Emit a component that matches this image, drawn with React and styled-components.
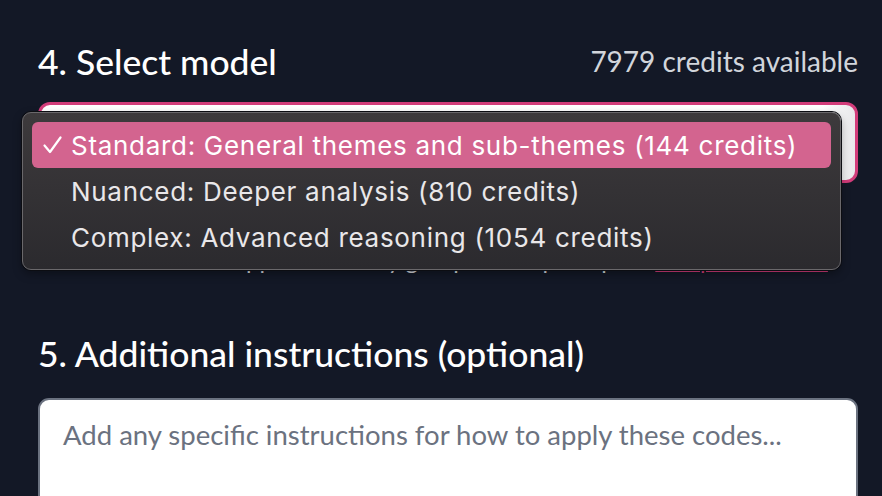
import React from "react";
import styled, { createGlobalStyle } from "styled-components";

const GlobalStyle = createGlobalStyle`
  html, body {
    margin: 0;
    padding: 0;
    background: #131826;
  }
  body {
    font-family: Lato, "Noto Sans", sans-serif;
    overflow: hidden;
  }
`;

const Page = styled.div`
  width: 882px;
  height: 496px;
  box-sizing: border-box;
  padding: 38px 24px 0 38px;
  background: #131826;
  overflow: hidden;
`;

const Section = styled.section`
  display: flex;
  flex-direction: column;
  margin-bottom: ${(p) => p.$gap || 0}px;
`;

const HeaderRow = styled.div`
  display: flex;
  justify-content: space-between;
  align-items: center;
`;

const Heading = styled.h2`
  margin: 0;
  font-family: Lato, sans-serif;
  font-weight: 500;
  font-size: 35.5px;
  line-height: 48px;
  color: #ffffff;
`;

const Credits = styled.span`
  font-family: Lato, sans-serif;
  font-size: 28px;
  color: #d1d5db;
  padding-bottom: 2px;
`;

const SelectArea = styled.div`
  position: relative;
  margin-top: 16px;
`;

const SelectBox = styled.div`
  height: 81px;
  box-sizing: border-box;
  border: 3px solid #d23c7a;
  border-radius: 12px;
  background: linear-gradient(90deg, #ffffff 96%, #e8e8ea 100%);
`;

const Menu = styled.ul`
  position: absolute;
  left: -16px;
  top: 10px;
  width: 819px;
  margin: 0;
  padding: 9px 9px;
  box-sizing: border-box;
  list-style: none;
  border-radius: 9px;
  border: 1px solid #6a686b;
  background: linear-gradient(180deg, #3d3a3c 0%, #2b2a2e 100%);
  box-shadow: 0 0 0 1px #0c0d12, 0 4px 10px rgba(0, 0, 0, 0.35);
`;

const Option = styled.li`
  display: flex;
  align-items: center;
  height: 46px;
  padding: 0 0 0 11px;
  border-radius: 6px;
  font-family: Inter, "Liberation Sans", sans-serif;
  font-size: 26px;
  letter-spacing: 0.7px;
  color: #e9e7e9;
  background: ${(p) => (p.$active ? "#d3648f" : "transparent")};
  ${(p) => p.$active && "color: #ffffff;"}
`;

const Check = styled.span`
  width: 28px;
  display: inline-flex;
  align-items: center;
`;

const Hint = styled.p`
  margin: 62px 0 0;
  font-family: Lato, sans-serif;
  font-size: 24px;
  line-height: 30px;
  color: #d1d5db;
  padding-left: 196px;

  a {
    color: #d23c7a;
    text-decoration: underline;
    text-decoration-thickness: 2px;
  }
`;

const TextArea = styled.div`
  margin-top: 20px;
  height: 140px;
  box-sizing: border-box;
  border: 2px solid #6b7280;
  border-radius: 11px;
  background: #ffffff;
  padding: 18px 23px;
  font-family: Lato, sans-serif;
  font-size: 27.5px;
  color: #6b7280;
`;

const options = [
  { label: "Standard: General themes and sub-themes (144 credits)", active: true },
  { label: "Nuanced: Deeper analysis (810 credits)" },
  { label: "Complex: Advanced reasoning (1054 credits)" },
];

export default function App() {
  return (
    <Page>
      <GlobalStyle />
      <Section $gap={55}>
        <HeaderRow>
          <Heading>4. Select model</Heading>
          <Credits>7979 credits available</Credits>
        </HeaderRow>
        <SelectArea>
          <SelectBox />
          <Hint>
            applies to every group of sample replies <a href="#">compare models</a>
          </Hint>
          <Menu>
            {options.map((o) => (
              <Option key={o.label} $active={o.active}>
                <Check>
                  {o.active && (
                    <svg width="19" height="18" viewBox="0 0 19 18">
                      <path d="M1.5 9.5 L7 16 L17.5 1.5" fill="none" stroke="#fff" strokeWidth="2.2" strokeLinecap="round" strokeLinejoin="round" />
                    </svg>
                  )}
                </Check>
                {o.label}
              </Option>
            ))}
          </Menu>
        </SelectArea>
      </Section>
      <Section>
        <Heading>5. Additional instructions (optional)</Heading>
        <TextArea>Add any specific instructions for how to apply these codes...</TextArea>
      </Section>
    </Page>
  );
}
